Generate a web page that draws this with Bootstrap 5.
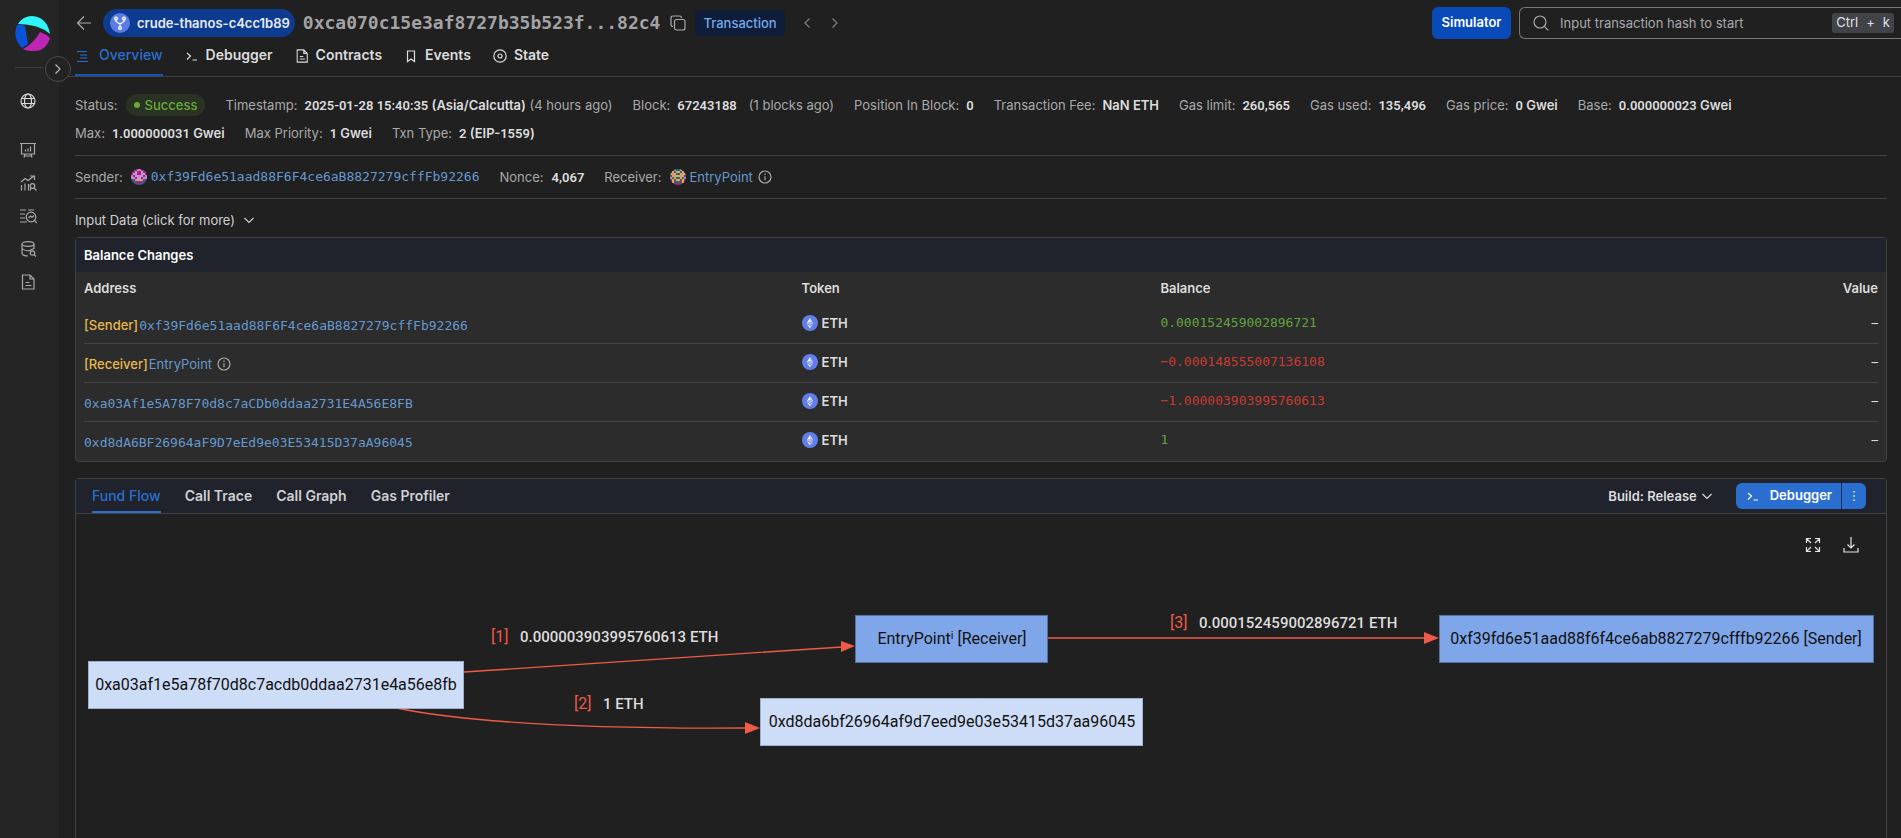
<!DOCTYPE html>
<html lang="en" data-bs-theme="dark">
<head>
<meta charset="utf-8">
<meta name="viewport" content="width=device-width, initial-scale=1">
<title>Transaction overview</title>
<link href="https://cdn.jsdelivr.net/npm/bootstrap@5.3.0/dist/css/bootstrap.min.css" rel="stylesheet">
<style>
:root{--bg:#202020;--line:#424245;--text:#dcdcdd;--muted:#a9a9ab;--link:#6698cf;--blue:#2a6fd0}
body{background:var(--bg);color:var(--text);font-family:Inter,sans-serif;font-size:13px;line-height:20px}
svg{display:block;flex:none}
.ico{fill:none;stroke:currentColor;stroke-width:1.2}
.rail{width:59px;background:#252525;padding-top:16px;flex:none}
.rail a{color:#a9a9ab;height:33px;margin-left:20px;width:18px}
.rail hr{margin:15px 16px 16px 15px;border-color:#88888c;width:28px}
.rail .first{height:34px;margin-bottom:15px;color:#dcdcdd}
.plain{background:none;border:0;padding:0;color:inherit;line-height:20px}
.toggle{left:45px;top:56px;width:26px;height:26px;padding:0;background:#222;border:1px solid #4a4a4d;color:#bbb;z-index:2}
.top-row{height:38px;padding:8px 0 0 17px}
.back{color:#a9a9ab}
.chip{height:28px;padding:0 5px 0 7px;margin-left:11px;background:#0d3b8f;border-radius:14px;color:#e6ebf5;font-weight:600;gap:7px}
.hash{font:bold 18px/28px "DejaVu Sans Mono",monospace;color:#a3a3a5;margin:0 10px 0 8px}
.copy{color:#a9a9ab}
.kind{height:26px;line-height:26px;padding:0 8px;margin-left:9px;background:#0f1c3a;color:#75a9e9;border-radius:4px;font-weight:500}
.sim{height:32px;width:79px;background:#084bb8;color:#fff;font-weight:600;border-radius:6px;font-size:13px;padding:0}
.search{width:382px;height:32px;border:1px solid #77777b;border-right:0;border-radius:6px 0 0 6px;padding:0 7px 0 13px;margin-left:8px;color:#a9a9ab}
.search input{background:none;border:0;outline:0;color:inherit;font-size:13px;min-width:0;padding:0 0 0 11px}
.search input::placeholder{color:#a9a9ab;opacity:1}
.keys{background:#424249;color:#e0e0e8;border-radius:3px;padding:0 4px;gap:8px;height:20px;line-height:19px}
.tabs{height:39px;padding-left:16px;border-bottom:1px solid var(--line);gap:22px}
.tabs a{font-size:14px;font-weight:600;color:var(--text);text-decoration:none;height:38px;padding-top:7px;line-height:20px;gap:7px}
.tabs a:first-child{gap:10px}
.tabs a.on,.subtabs a.on{color:var(--blue);font-weight:500;border-bottom:2px solid #1453bd}
.content{padding:0 14px 0 16px}
.facts{padding:14px 0 8px;gap:0 20px;border-bottom:1px solid var(--line)}
.fact{height:28px;line-height:28px;color:var(--muted);white-space:nowrap}
.fact b{color:var(--text);font-weight:600;margin-left:7px}
.fact .after{margin-left:12px}
.dig{font-family:Roboto,sans-serif;font-weight:600}
.ok{display:inline-flex;align-items:center;height:22px;border-radius:11px;background:#2a3323;color:#66a93c;font-weight:500;padding:0 8px;margin-left:8px;gap:5px}
.dot{width:6px;height:6px;border-radius:50%;background:#66a93c}
.parties{height:43px;gap:20px;border-bottom:1px solid var(--line)}
.hint{margin-left:5px;color:#a9a9ab}
a.addr{color:var(--link);text-decoration:none}
.mono{font-family:"DejaVu Sans Mono",monospace}
.more{height:38px;padding-top:3px;gap:8px;color:#cfcfd1}
.panel{border:1px solid var(--line);border-radius:4px}
.panel-head{background:#20232c}
.bal{background:#2c2c2c}
.bal h2{font-size:13px;font-weight:600;line-height:34px;padding-left:8px;margin:0}
.bal table{width:calc(100% - 16px);margin:0 8px;table-layout:fixed;border-collapse:separate;border-spacing:0}
.bal th{height:33px;font-weight:600;padding:0 0 1px}
.bal td{height:39px;padding:0 0 3px;border-bottom:1px solid #444447}
.bal tr:last-child td{border-bottom:0}
.bal td:first-child{padding:2px 0 0}
.tag{color:#e8b84c;font-weight:500;margin-right:1px}
.up{color:#62a33b}.down{color:#c93a30}
.flow{margin-top:16px;border-bottom:0;border-radius:4px 4px 0 0}
.flow .panel-head{height:35px;border-bottom:1px solid var(--line);padding:0 20px 0 16px}
.subtabs{gap:24px}
.subtabs a{height:34px;line-height:34px;font-size:14px;font-weight:600;color:#cfcfd1;text-decoration:none}
.subtabs a.on{border-color:var(--blue)}
.build{font-size:13px;font-weight:600;color:var(--text);margin-right:23px;gap:4px}
.run{height:26px;background:var(--blue);color:#fff;font-size:13px;font-weight:600;padding:0 10px;border:0;gap:10px}
.btn-group>.run.dots{padding:0 5px;border-left:1px solid #16305e}
.tools{gap:22px;height:62px;padding:0 27px 0 0}
.tools button{color:#e4e4e6}
.graph{width:100%;height:auto;font-family:Roboto,sans-serif;font-size:16px}
.edge{fill:none;stroke:#ef5a49;stroke-width:1.4}
.head{fill:#ef5a49}
.node{fill:#7ea6e9;stroke:#56719f}
.node.pale{fill:#cddcf7;stroke:#9fb0cc}
.graph text{text-anchor:middle;fill:#111}
.graph .num{fill:#ef5a49;text-anchor:start}
.graph .amt{fill:#dcdcdd;font-weight:500;font-size:15px;text-anchor:start}
</style>
</head>
<body>
<svg width="0" height="0" class="position-absolute" aria-hidden="true">
<symbol id="down" viewBox="0 0 12 12"><path d="M1.500 4 6 8.500 10.500 4"/></symbol>
<symbol id="right" viewBox="0 0 12 12"><path d="M3.500 1.500 8 6l-4.500 4.500"/></symbol>
<symbol id="left" viewBox="0 0 12 12"><path d="M8.500 1.500 4 6l4.500 4.500"/></symbol>
<symbol id="term" viewBox="0 0 14 14"><path d="m2 4 3.500 3L2 10.500M7.500 11H12"/></symbol>
<symbol id="info" viewBox="0 0 14 14"><circle cx="7" cy="7" r="6"/><path d="M7 6.300V10.300M7 3.600v1.400"/></symbol>
<symbol id="doc" viewBox="0 0 16 16"><path d="M2.500 1h7.500l4 4v10h-11.500zM10 1v4h4M5.500 8.500h4M5.500 11.500h6"/></symbol>
<symbol id="eth" viewBox="0 0 16 16"><circle cx="8" cy="8" r="8" fill="#627eea"/><path d="M8 3v4l3.300 1.300z" fill="#c9d3f8"/><path d="M8 3 4.700 8.300 8 7z" fill="#fff"/><path d="M8 7 4.700 8.300 8 10.200l3.300-1.900z" fill="#aab9f3"/><path d="M4.700 9 8 13.300V11z" fill="#fff"/><path d="M11.300 9 8 13.300V11z" fill="#c9d3f8"/></symbol>
</svg>
<div class="d-flex vh-100 overflow-hidden position-relative">
<nav class="rail d-flex flex-column" aria-label="Main">
<svg width="36" height="36" viewBox="0 0 36 36" style="margin-left:15px"><path d="M3 8Q8 0 17 0 32 1 35 18 24 8 3 8z" fill="#2ef5f7"/><path d="M2 9q4-1 8 1l3 18-6 4Q-3 22 2 9z" fill="#0853d8"/><path d="m25 16q6 2 10 6-4 13-16 13-7 0-11-2 10-5 17-17z" fill="#bd25b4"/></svg>
<hr>
<a href="#" class="first d-flex align-items-center" aria-label="Network"><svg class="ico" width="16" height="16" viewBox="0 0 16 16"><circle cx="8" cy="8" r="7"/><ellipse cx="8" cy="8" rx="3.500" ry="7"/><path d="M1.500 5.500h13M1.500 10.500h13"/></svg></a>
<a href="#" class="d-flex align-items-center" aria-label="Dashboard"><svg class="ico" width="16" height="16" viewBox="0 0 16 16"><path d="M0 1.500h16M1.500 1.500V12h13V1.500M5.500 9.500v-2M8 9.500V6.500M10.500 9.500v-5M5 12l-1 3.500M11 12l1 3.500M4 14h8"/></svg></a>
<a href="#" class="d-flex align-items-center" aria-label="Analytics"><svg class="ico" width="17" height="16" viewBox="0 0 17 16"><path d="m1 7 4-3.500 3 2L14 1M10 1h4.500v4M1.500 15.500V10M5 15.500V8.500M8.500 15.500V9"/><circle cx="12.500" cy="11" r="2.300"/><path d="m14 13 2.500 2.500M11 13l-1 2.500"/></svg></a>
<a href="#" class="d-flex align-items-center" aria-label="Explorer"><svg class="ico" width="17" height="16" viewBox="0 0 17 16"><path d="M0 2h6M8 2h6M0 6h5M0 10h5M0 14h7"/><circle cx="11" cy="9" r="4.800"/><path d="m8.500 10 2-2 1.500 1.500 2-2M14.500 12.500 17 15"/></svg></a>
<a href="#" class="d-flex align-items-center" aria-label="Data"><svg class="ico" width="17" height="16" viewBox="0 0 17 16"><ellipse cx="8" cy="3" rx="6" ry="2.300"/><path d="M2 3v9.500Q3 15 8 15M14 3v5M2 7.500Q4 10 9 9.700M9 9.700 14 7.500"/><circle cx="12.500" cy="12" r="2.200"/><path d="m14 13.500 2 2"/></svg></a>
<a href="#" class="d-flex align-items-center" aria-label="Documents"><svg class="ico" width="16" height="16"><use href="#doc"/></svg></a>
</nav>
<button class="toggle rounded-circle position-absolute d-flex align-items-center justify-content-center" aria-label="Expand menu"><svg class="ico" width="12" height="12"><use href="#right"/></svg></button>
<main class="flex-grow-1 d-flex flex-column overflow-hidden">
<div class="top-row d-flex align-items-center flex-shrink-0">
<a href="#" class="back" aria-label="Back"><svg class="ico" width="16" height="16" viewBox="0 0 16 16"><path d="M15 8H2M8 1.500 1.500 8 8 14.500"/></svg></a>
<span class="chip d-flex align-items-center text-nowrap"><svg width="20" height="20" viewBox="0 0 20 20"><circle cx="10" cy="10" r="10" fill="#5b7be8"/><g fill="none" stroke="#fff" stroke-width="1.300"><circle cx="6" cy="5.500" r="1.400"/><circle cx="14" cy="5.500" r="1.400"/><circle cx="10" cy="15" r="1.400"/><path d="M6 7v1.500L10 11l4-2.500V7M10 11v2.500"/></g></svg>crude-thanos-c4cc1b89</span>
<span class="hash">0xca070c15e3af8727b35b523f...82c4</span>
<button class="plain copy" aria-label="Copy"><svg class="ico" width="16" height="16" viewBox="0 0 16 16"><rect x="4.500" y="4.500" width="10.500" height="10.500" rx="2"/><path d="M3 11.500q-2 0-2-2V3q0-2 2-2h6.500q2 0 2 2"/></svg></button>
<span class="kind">Transaction</span>
<button class="plain ms-3 opacity-50" aria-label="Previous"><svg class="ico" width="12" height="12"><use href="#left"/></svg></button>
<button class="plain ms-3 opacity-50" aria-label="Next"><svg class="ico" width="12" height="12"><use href="#right"/></svg></button>
<button class="btn sim ms-auto">Simulator</button>
<div class="search d-flex align-items-center"><svg class="ico" width="16" height="16" viewBox="0 0 16 16"><circle cx="7" cy="7" r="6"/><path d="m11.300 11.300 4 4"/></svg><input class="flex-grow-1" type="text" aria-label="Transaction hash" placeholder="Input transaction hash to start"><span class="keys d-flex"><span>Ctrl</span><span>+</span><span>k</span></span></div>
</div>
<nav class="tabs d-flex flex-shrink-0" aria-label="Transaction">
<a href="#" class="on d-flex"><svg class="ico mt-1" width="14" height="14" viewBox="0 0 14 14"><path d="M2 2.500h10M5 6h7M5 9h7M2 12.500h11"/></svg>Overview</a>
<a href="#" class="d-flex"><svg class="ico mt-1" width="14" height="14"><use href="#term"/></svg>Debugger</a>
<a href="#" class="d-flex"><svg class="ico mt-1" width="14" height="14"><use href="#doc"/></svg>Contracts</a>
<a href="#" class="d-flex"><svg class="ico mt-1" width="14" height="14" viewBox="0 0 14 14"><path d="M3.500 2h7v10.500L7 10l-3.500 2.500z"/></svg>Events</a>
<a href="#" class="d-flex"><svg class="ico mt-1" width="14" height="14" viewBox="0 0 14 14"><circle cx="7" cy="7" r="6.200"/><circle cx="7" cy="7" r="2"/></svg>State</a>
</nav>
<div class="content flex-grow-1 d-flex flex-column">
<section class="facts d-flex flex-wrap">
<div class="fact d-flex align-items-center">Status:<span class="ok"><span class="dot"></span>Success</span></div>
<div class="fact">Timestamp:<b><span class="dig">2025-01-28 15:40:35</span> (Asia/Calcutta)</b> (4 hours ago)</div>
<div class="fact">Block:<b class="dig">67243188</b><span class="after">(1 blocks ago)</span></div>
<div class="fact">Position In Block:<b class="dig">0</b></div>
<div class="fact">Transaction Fee:<b>NaN ETH</b></div>
<div class="fact">Gas limit:<b class="dig">260,565</b></div>
<div class="fact">Gas used:<b class="dig">135,496</b></div>
<div class="fact">Gas price:<b><span class="dig">0</span> Gwei</b></div>
<div class="fact">Base:<b><span class="dig">0.000000023</span> Gwei</b></div>
<div class="fact">Max:<b><span class="dig">1.000000031</span> Gwei</b></div>
<div class="fact">Max Priority:<b><span class="dig">1</span> Gwei</b></div>
<div class="fact">Txn Type:<b><span class="dig">2</span> (EIP-<span class="dig">1559</span>)</b></div>
</section>
<section class="parties d-flex align-items-center">
<div class="fact d-flex align-items-center">Sender:<svg class="blocky ms-2 me-1" width="16" height="16" viewBox="0 0 8 8" data-cells="MPMPPMPM PMWMMWMP MWPMMPWM PMWPPWMP WPMWWMPW TMPOOPMT MTTMMTTM TTMTTMTT"></svg><a class="addr mono" href="#">0xf39Fd6e51aad88F6F4ce6aB8827279cffFb92266</a></div>
<div class="fact">Nonce:<b class="dig ms-2">4,067</b></div>
<div class="fact d-flex align-items-center">Receiver:<svg class="blocky ms-2 me-1" width="16" height="16" viewBox="0 0 8 8" data-cells="TTPTTPTT TOTOOTOT OPOTTOPO TOPOOPOT PTOTTOTP MOTOOTOM TOMTTMOT TMTMMTMT"></svg><a class="addr" href="#">EntryPoint</a><svg class="ico hint" width="14" height="14"><use href="#info"/></svg></div>
</section>
<div class="more d-flex align-items-center flex-shrink-0"><button class="plain">Input Data (click for more)</button><svg class="ico" width="12" height="12"><use href="#down"/></svg></div>
<section class="panel bal">
<h2 class="panel-head">Balance Changes</h2>
<table>
<colgroup><col style="width:40%"><col style="width:20%"><col style="width:20%"><col style="width:20%"></colgroup>
<thead><tr><th>Address</th><th>Token</th><th>Balance</th><th class="text-end">Value</th></tr></thead>
<tbody>
<tr><td><span class="tag">[Sender]</span><a class="addr mono" href="#">0xf39Fd6e51aad88F6F4ce6aB8827279cffFb92266</a></td><td><span class="d-flex align-items-center gap-1 fw-semibold"><svg width="16" height="16"><use href="#eth"/></svg>ETH</span></td><td class="mono up">0.000152459002896721</td><td class="text-end">–</td></tr>
<tr><td><span class="d-flex align-items-center"><span class="tag">[Receiver]</span><a class="addr" href="#">EntryPoint</a><svg class="ico hint" width="14" height="14"><use href="#info"/></svg></span></td><td><span class="d-flex align-items-center gap-1 fw-semibold"><svg width="16" height="16"><use href="#eth"/></svg>ETH</span></td><td class="mono down">−0.000148555007136108</td><td class="text-end">–</td></tr>
<tr><td><a class="addr mono" href="#">0xa03Af1e5A78F70d8c7aCDb0ddaa2731E4A56E8FB</a></td><td><span class="d-flex align-items-center gap-1 fw-semibold"><svg width="16" height="16"><use href="#eth"/></svg>ETH</span></td><td class="mono down">−1.000003903995760613</td><td class="text-end">–</td></tr>
<tr><td><a class="addr mono" href="#">0xd8dA6BF26964aF9D7eEd9e03E53415D37aA96045</a></td><td><span class="d-flex align-items-center gap-1 fw-semibold"><svg width="16" height="16"><use href="#eth"/></svg>ETH</span></td><td class="mono up">1</td><td class="text-end">–</td></tr>
</tbody></table>
</section>
<section class="panel flow flex-grow-1">
<div class="panel-head d-flex align-items-center">
<nav class="subtabs d-flex" aria-label="Trace views"><a href="#" class="on">Fund Flow</a><a href="#">Call Trace</a><a href="#">Call Graph</a><a href="#">Gas Profiler</a></nav>
<button class="plain build ms-auto d-flex align-items-center">Build: Release<svg class="ico" width="12" height="12"><use href="#down"/></svg></button>
<div class="btn-group"><button class="btn run d-flex align-items-center"><svg class="ico" width="14" height="14"><use href="#term"/></svg>Debugger</button><button class="btn run dots" aria-label="More"><svg width="14" height="14" fill="currentColor" viewBox="0 0 14 14"><path d="M6.300 2h1.500v1.500H6.300zM6.300 6.300h1.500v1.500H6.300zM6.300 10.500h1.500V12H6.300z"/></svg></button></div>
</div>
<div class="tools d-flex align-items-center justify-content-end">
<button class="plain" aria-label="Fullscreen"><svg class="ico" width="16" height="16" viewBox="0 0 16 16"><path d="M1.500 6V1.500H6M10 1.500h4.500V6M14.500 10v4.500H10M6 14.500H1.500V10M1.500 1.500 6 6M14.500 1.500 10 6M14.500 14.500 10 10M1.500 14.500 6 10"/></svg></button>
<button class="plain" aria-label="Download"><svg class="ico" width="16" height="16" viewBox="0 0 16 16"><path d="M8 0v11M4.500 7.500 8 11l3.500-3.500M1 11v4h14v-4"/></svg></button>
</div>
<svg class="graph" viewBox="0 0 1810 250" role="img" aria-label="Fund flow">
<path class="edge" d="M388 96 766 71M320 132C400 148 520 153 670 152M972 62H1350"/>
<path class="head" d="m765 65 14 5-14 6zM669 146l15 6-15 6zM1348 56l15 6-15 6z"/>
<rect class="node pale" x="12.500" y="85.500" width="375" height="47"/><text x="200" y="114">0xa03af1e5a78f70d8c7acdb0ddaa2731e4a56e8fb</text>
<rect class="node" x="779.500" y="39.500" width="192" height="47"/><text x="876" y="68">EntryPoint<tspan font-size="11" dy="-5">i</tspan><tspan dy="5"> [Receiver]</tspan></text>
<rect class="node pale" x="684.500" y="122.500" width="382" height="47"/><text x="876" y="151">0xd8da6bf26964af9d7eed9e03e53415d37aa96045</text>
<rect class="node" x="1363.500" y="39.500" width="434" height="47"/><text x="1580" y="68">0xf39fd6e51aad88f6f4ce6ab8827279cfffb92266 [Sender]</text>
<text class="num" x="415" y="66">[1]</text><text class="amt" x="444" y="66">0.000003903995760613 ETH</text>
<text class="num" x="498" y="133">[2]</text><text class="amt" x="527" y="133">1 ETH</text>
<text class="num" x="1094" y="52">[3]</text><text class="amt" x="1123" y="52">0.000152459002896721 ETH</text>
</svg>
</section>
</div>
</main>
</div>
<script>
// Paint each address avatar as a round grid of coloured cells.
const colours = {M:'#c4148c', P:'#d486c4', W:'#8fb4dc', O:'#f2a63b', T:'#15727f'};
document.querySelectorAll('.blocky').forEach(svg => {
  svg.classList.add('rounded-circle');
  svg.dataset.cells.split(' ').forEach((row, y) => [...row].forEach((c, x) => {
    const r = document.createElementNS('http://www.w3.org/2000/svg', 'rect');
    for (const [k, v] of Object.entries({x, y, width: 1, height: 1, fill: colours[c]})) r.setAttribute(k, v);
    svg.append(r);
  }));
});
</script>
<script src="https://cdn.jsdelivr.net/npm/bootstrap@5.3.0/dist/js/bootstrap.bundle.min.js"></script>
</body>
</html>
